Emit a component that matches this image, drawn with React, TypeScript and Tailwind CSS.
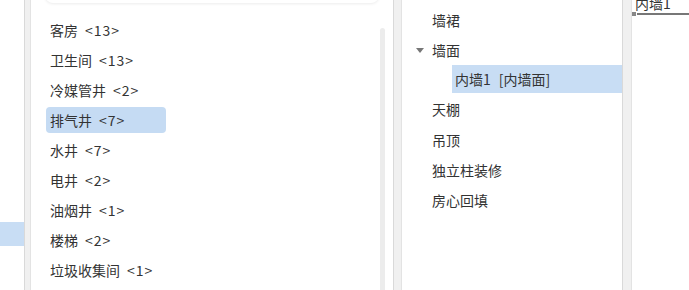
const rooms = [
  { name: '客房', count: 13 },
  { name: '卫生间', count: 13 },
  { name: '冷媒管井', count: 2 },
  { name: '排气井', count: 7 },
  { name: '水井', count: 7 },
  { name: '电井', count: 2 },
  { name: '油烟井', count: 1 },
  { name: '楼梯', count: 2 },
  { name: '垃圾收集间', count: 1 },
];

function Divider({ width }: { width: string }) {
  return <div className={`${width} shrink-0 border-l border-r border-l-[#d9d9d9] border-r-[#e3e3e3] bg-[#f0f0f0]`} />;
}

export default function App() {
  return (
    <div
      className="flex h-[290px] w-[689px] overflow-hidden bg-white text-[14px] text-[#333]"
      style={{ fontFamily: '"Microsoft YaHei", "Noto Sans CJK SC", sans-serif' }}
    >
      {/* far left sliver */}
      <div className="w-[24px] shrink-0">
        <div className="mt-[222px] h-[24px] bg-[#c8ddf4]" />
      </div>
      <Divider width="w-[7px]" />

      {/* room list */}
      <div className="flex w-[362px] shrink-0 flex-col">
        <div className="mx-[14px] -mt-[12px] h-[15px] rounded-b-[8px] bg-white shadow-[0_1px_3px_rgba(0,0,0,0.08)]" />
        <div className="flex flex-1">
          <ul className="flex-1 pl-[15px] pt-[12px]">
            {rooms.map((r, i) => (
              <li key={r.name} className="flex h-[30px] items-center">
                <span
                  className={`flex h-[26px] w-[120px] items-center rounded-[4px] px-[4px] whitespace-nowrap ${
                    i === 3 ? 'bg-[#c5dbf3]' : ''
                  }`}
                >
                  {r.name}
                  <span className="ml-[7px] tracking-[1px]">{`<${r.count}>`}</span>
                </span>
              </li>
            ))}
          </ul>
          <div className="mr-[8px] mt-[25px] w-[5px] rounded-t-[3px] bg-[#ececec]" />
        </div>
      </div>
      <Divider width="w-[9px]" />

      {/* tree */}
      <div className="w-[220px] shrink-0 pt-[5px]">
        <div className="flex h-[30px] items-center pl-[30px]">墙裙</div>
        <div className="flex h-[30px] items-center">
          <span className="ml-[14px] mr-[8px] h-0 w-0 border-l-[4px] border-r-[4px] border-t-[5px] border-l-transparent border-r-transparent border-t-[#777]" />
          墙面
        </div>
        <div className="ml-[50px] flex h-[28px] items-center bg-[#c8ddf4] pl-[3px] whitespace-nowrap">
          内墙1<span className="ml-[8px]">[内墙面]</span>
        </div>
        <div className="flex h-[32px] items-center pl-[30px]">天棚</div>
        <div className="flex h-[30px] items-center pl-[30px]">吊顶</div>
        <div className="flex h-[30px] items-center pl-[30px]">独立柱装修</div>
        <div className="flex h-[30px] items-center pl-[30px]">房心回填</div>
      </div>
      <Divider width="w-[10px]" />

      {/* property editor */}
      <div className="relative flex-1">
        <div className="-mt-[7px] pl-[3px] leading-[20px] whitespace-nowrap">内墙1</div>
        <div className="absolute left-0 top-[12px] h-[4px] w-[4px] bg-[#888]" />
        <div className="ml-[5px] h-[2px] bg-[#777]" />
      </div>
    </div>
  );
}
